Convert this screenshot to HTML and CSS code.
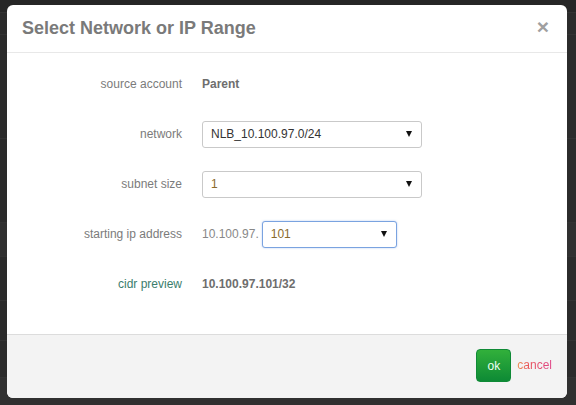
FILE: index.html
```html
<!DOCTYPE html>
<html>
<head>
<meta charset="utf-8">
<link rel="stylesheet" href="styles.css">
</head>
<body>
<div class="page">
  <div class="bg-row r1"></div>
  <div class="bg-row r2"></div>
  <div class="bg-row r3"></div>
  <div class="bg-row r4"></div>
  <div class="bg-row r5 light"></div>
  <div class="bg-row r6"></div>
  <div class="bg-row r7"></div>
  <div class="bg-row r8"></div>
  <div class="bg-row r9 light"></div>
</div>
<div class="modal">
  <div class="modal-header">
    <h3 class="title">Select Network or IP Range</h3>
    <span class="close">×</span>
  </div>
  <div class="modal-body">
    <div class="row">
      <div class="label">source account</div>
      <div class="value strong">Parent</div>
    </div>
    <div class="row">
      <div class="label">network</div>
      <div class="value">
        <div class="select wide"><span class="sel-text dark">NLB_10.100.97.0/24</span><span class="arrow"></span></div>
      </div>
    </div>
    <div class="row">
      <div class="label">subnet size</div>
      <div class="value">
        <div class="select wide"><span class="sel-text gold">1</span><span class="arrow"></span></div>
      </div>
    </div>
    <div class="row">
      <div class="label">starting ip address</div>
      <div class="value">
        <span class="prefix">10.100.97.</span>
        <div class="select narrow focus"><span class="sel-text gold">101</span><span class="arrow"></span></div>
      </div>
    </div>
    <div class="row">
      <div class="label teal">cidr preview</div>
      <div class="value strong">10.100.97.101/32</div>
    </div>
  </div>
  <div class="modal-footer">
    <button class="btn-ok">ok</button>
    <span class="cancel">cancel</span>
  </div>
</div>
</body>
</html>
```
FILE: styles.css
```css
html, body {
  margin: 0;
  padding: 0;
}
body {
  width: 576px;
  height: 405px;
  overflow: hidden;
  background: #2a2a2a;
  font-family: "Liberation Sans", Arial, sans-serif;
  position: relative;
}
.page {
  display: flex;
  flex-direction: column;
}
.bg-row {
  border-bottom: 1px solid #333;
  background: #2b2b2b;
}
.bg-row.light { background: #303030; }
.r1 { height: 12px; background: #262626; }
.r2 { height: 21px; }
.r3 { height: 103px; }
.r4 { height: 83px; }
.r5 { height: 33px; }
.r6 { height: 43px; }
.r7 { height: 39px; }
.r8 { height: 36px; }
.r9 { height: 30px; background: #1f1f1f; }

.modal {
  position: absolute;
  left: 7px;
  top: 5px;
  width: 560px;
  height: 393px;
  background: #fff;
  border-radius: 6px;
  display: flex;
  flex-direction: column;
  overflow: hidden;
}
.modal-header {
  height: 47px;
  border-bottom: 1px solid #e8e8e8;
  display: flex;
  align-items: center;
  justify-content: space-between;
  padding: 0 18px 0 15px;
  flex: none;
}
.title {
  margin: 0;
  font-size: 18px;
  font-weight: bold;
  color: #7a7a7a;
}
.close {
  font-size: 21px;
  font-weight: bold;
  color: #a0a0a0;
  line-height: 1;
  margin-top: -4px;
}
.modal-body {
  flex: 1;
  padding: 6px 0 0;
  display: flex;
  flex-direction: column;
}
.row {
  height: 50px;
  display: grid;
  grid-template-columns: 175px 1fr;
  column-gap: 20px;
  align-items: center;
}
.label {
  text-align: right;
  font-size: 12px;
  color: #7b7b7b;
}
.label.teal { color: #3b7d6d; }
.value {
  display: flex;
  align-items: center;
  font-size: 12px;
  color: #777;
}
.value.strong {
  font-weight: bold;
  color: #6e6e6e;
}
.select {
  height: 25px;
  border: 1px solid #c9c9c9;
  border-radius: 3px;
  display: flex;
  align-items: center;
  justify-content: space-between;
  padding: 0 9px 0 8px;
  box-sizing: content-box;
  background: #fff;
}
.select.wide { width: 201px; }
.select.narrow { width: 116px; margin-left: 3px; }
.select.focus {
  border-color: #7aa3e0;
  box-shadow: 0 0 2px rgba(102, 150, 230, 0.5);
}
.sel-text { font-size: 12px; }
.sel-text.dark { color: #333; }
.sel-text.gold { color: #8a6a2a; }
.arrow {
  width: 0;
  height: 0;
  border-left: 3px solid transparent;
  border-right: 3px solid transparent;
  border-top: 6px solid #111;
}
.prefix { color: #888; }
.modal-footer {
  height: 63px;
  flex: none;
  background: #f3f3f3;
  border-top: 1px solid #dcdcdc;
  display: flex;
  align-items: center;
  justify-content: flex-end;
  padding: 0 15px 0 0;
  gap: 6px;
}
.btn-ok {
  width: 35px;
  height: 33px;
  border: 1px solid #0f8a36;
  border-radius: 4px;
  background: linear-gradient(#32b03b, #0d8a35);
  color: #eefff4;
  font-family: "Liberation Sans", Arial, sans-serif;
  font-size: 12px;
  padding: 0;
  margin-top: -2px;
}
.cancel {
  font-size: 12px;
  margin-top: -4px;
  color: #e5475c;
  background: linear-gradient(90deg, #ee8f52 0%, #e8505a 35%, #e0488a 100%);
  -webkit-background-clip: text;
  background-clip: text;
  -webkit-text-fill-color: transparent;
}
```
